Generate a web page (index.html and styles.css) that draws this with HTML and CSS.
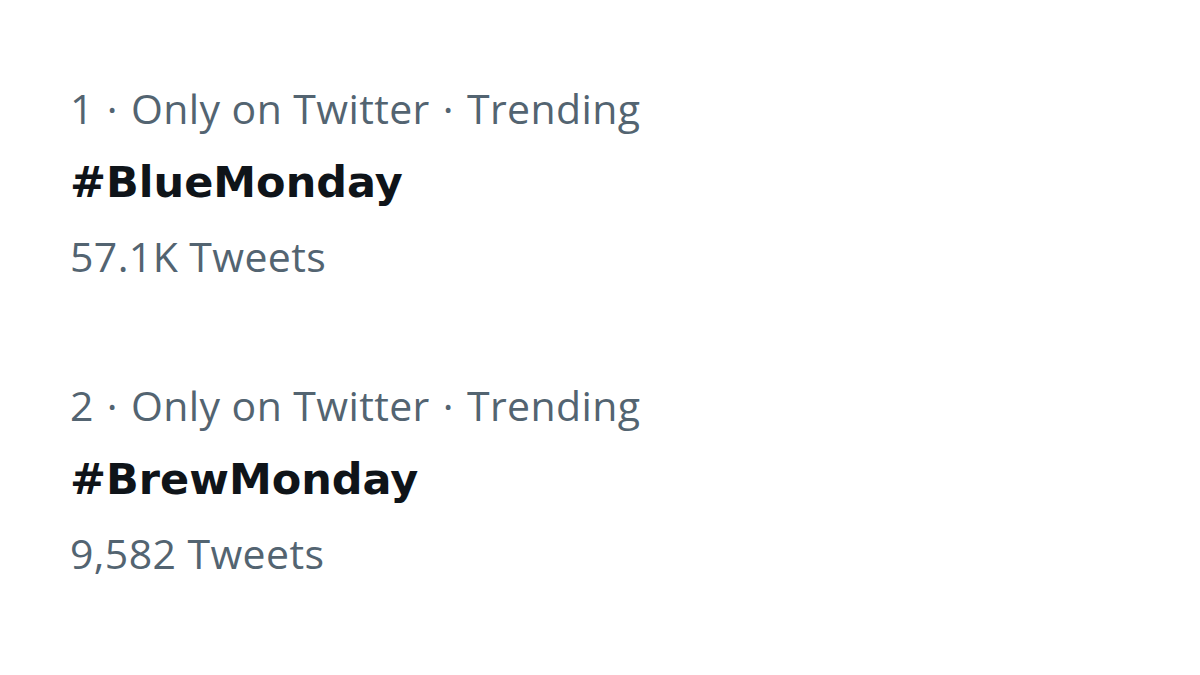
FILE: index.html
```html
<!DOCTYPE html>
<html>
<head>
<meta charset="utf-8">
<link rel="stylesheet" href="styles.css">
</head>
<body>
<div class="trends">
  <div class="trend">
    <div class="meta"><span>1</span><span class="dot">·</span><span>Only on Twitter</span><span class="dot">·</span><span>Trending</span></div>
    <div class="name">#BlueMonday</div>
    <div class="count">57.1K Tweets</div>
  </div>
  <div class="trend">
    <div class="meta"><span>2</span><span class="dot">·</span><span>Only on Twitter</span><span class="dot">·</span><span>Trending</span></div>
    <div class="name">#BrewMonday</div>
    <div class="count">9,582 Tweets</div>
  </div>
</div>
</body>
</html>
```
FILE: styles.css
```css
html, body {
  margin: 0;
  padding: 0;
  background: #ffffff;
}
body {
  width: 1200px;
  height: 675px;
  overflow: hidden;
  font-family: "Open Sans", "Noto Sans", "Liberation Sans", sans-serif;
}
.trends {
  display: flex;
  flex-direction: column;
  gap: 75px;
  padding: 71px 0 0 70px;
}
.trend {
  display: flex;
  flex-direction: column;
}
.meta, .count {
  font-size: 41px;
  line-height: 74px;
  letter-spacing: 0.4px;
  color: #536471;
  white-space: nowrap;
}
.dot {
  padding: 0 13px;
}
.name {
  font-family: "DejaVu Sans", "Open Sans", sans-serif;
  font-size: 43px;
  line-height: 74px;
  font-weight: 700;
  color: #0f1419;
}
```
